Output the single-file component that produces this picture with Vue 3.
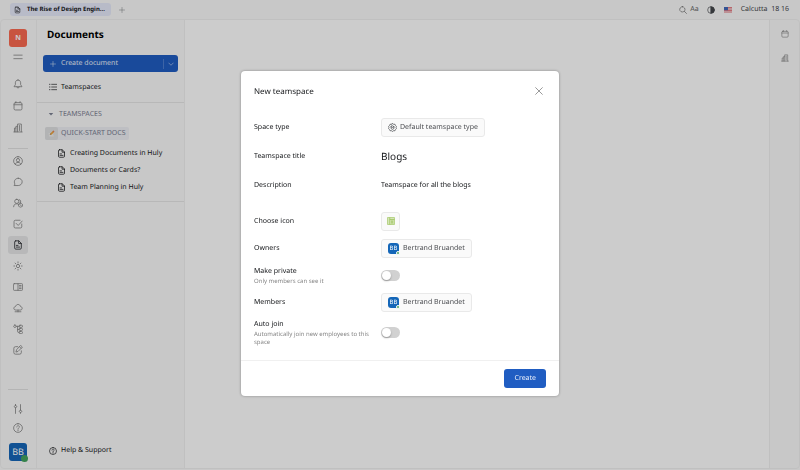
<script setup>
import { h, ref } from 'vue'

const shapes = {
  menu: ['M2 7.500h20', 'M2 16h20'],
  bell: ['M12 2.500c-4 0-6.300 2.800-6.300 6.500v4.500L2.500 18.500h19l-3.200-5V9c0-3.700-2.300-6.500-6.300-6.500z', 'M9 19c0 3.600 6 3.600 6 0'],
  calendar: ['M5.500 4h13a3 3 0 0 1 3 3v11.500a3 3 0 0 1-3 3h-13a3 3 0 0 1-3-3V7a3 3 0 0 1 3-3z', 'M2.500 9h19', 'M7 1.500V4', 'M17 1.500V4'],
  building: ['M2 21.500h20', 'M11 21V2.500h9V21', 'M11 8H7v13', 'M7 12H3.500v9', 'M15.500 6v12'],
  user: ['M12 1.500a10.500 10.500 0 1 0 0 21a10.500 10.500 0 1 0 0-21z', 'M12 6a4 4 0 1 0 0 8a4 4 0 1 0 0-8z', 'M5.500 20c.5-3.500 3-4.500 6.500-4.500s6 1 6.500 4.500'],
  chat: ['M12.500 3c5.500 0 9.500 3.600 9.500 8.500S18 20.500 12.500 20.500H2.500l2.200-3.500C1 11 4.500 3 12.500 3z'],
  people: ['M9 3a5 5 0 1 0 0 10a5 5 0 1 0 0-10z', 'M1.500 21c.5-5 3-7 7.500-7 2 0 3.500.4 4.500 1.300', 'M15 4c4 .5 5 5 2 7.500', 'M18 12a5 5 0 1 0 .1 0z', 'M15.500 14.500l5 5'],
  check: ['M21 12v6.500a3 3 0 0 1-3 3H5.500a3 3 0 0 1-3-3V6a3 3 0 0 1 3-3H17', 'M7.500 10.500l5 5L22 5'],
  document: ['M6.500 2H14l6 6v11a3 3 0 0 1-3 3H7a3 3 0 0 1-3-3V4.500A2.500 2.500 0 0 1 6.500 2z', 'M13.500 2v6.500H20', 'M8 13h4', 'M8 17h8'],
  sun: ['M12 8a4 4 0 1 0 0 8a4 4 0 1 0 0-8z', 'M12 2v2', 'M12 20v2', 'M2 12h2', 'M20 12h2', 'M5 5l1.500 1.500', 'M17.500 17.500L19 19', 'M19 5l-1.500 1.500', 'M6.500 17.500L5 19'],
  board: ['M3 4h18a2 2 0 0 1 2 2v12a2 2 0 0 1-2 2H3a2 2 0 0 1-2-2V6a2 2 0 0 1 2-2z', 'M12 4v16', 'M15.500 8.500h4', 'M15.500 12h4', 'M15.500 15.500h4'],
  cloud: ['M6.500 17C3.500 17 2 15 2 12.800 2 10.500 3.500 9 6 8.500 7 5.500 9 3.500 12 3.500s5.500 2 6 5c2.500.4 4 2 4 4.300S20.500 17 17.500 17z', 'M12 17v4', 'M5 21h14'],
  tree: ['M4.500 2.500a3 3 0 1 0 .1 0z', 'M17 3h3.500a2 2 0 0 1 0 5H17a2 2 0 0 1 0-5z', 'M7.500 5.500H15', 'M11 5.500V18a2 2 0 0 0 2 2h2', 'M11 13h4', 'M17 10.500h3.500a2 2 0 0 1 0 5H17a2 2 0 0 1 0-5z', 'M17 18h3.500a2 2 0 0 1 0 5H17a2 2 0 0 1 0-5z'],
  edit: ['M11 4H6a4 4 0 0 0-4 4v10a4 4 0 0 0 4 4h10a4 4 0 0 0 4-4v-4', 'M19 1.500l3.500 3.500L12 15.500l-5 1.500 1.500-5z', 'M16 4.500l3.500 3.500'],
  sliders: ['M6 9v13.500', 'M6 3a3 3 0 1 0 .1 0z', 'M6 1v2', 'M18 1.500V14', 'M18 14.500a3 3 0 1 0 .1 0z', 'M18 20.500v2'],
  help: ['M12 1.500a10.500 10.500 0 1 0 0 21a10.500 10.500 0 1 0 0-21z', 'M8.800 9.500c0-4.200 6.600-4.200 6.600 0 0 2.300-3.400 2.300-3.400 5', 'M12 17v1.500'],
  plus: ['M12 2v20', 'M2 12h20'],
  down: ['M3 8l9 9 9-9'],
  list: ['M8 4h15', 'M8 12h15', 'M8 20h15', 'M1 4h2', 'M1 12h2', 'M1 20h2'],
  search: ['M10 2a8 8 0 1 0 .1 0z', 'M16 16l6.500 6.500'],
  close: ['M2 2l20 20', 'M22 2L2 22'],
  gear: ['M12 1.500l3 2 3.500-.2 1.500 3.200 2.500 2.500-1 3 1 3-2.500 2.500-1.500 3.200-3.500-.2-3 2-3-2-3.500.2L4 17.500 1.500 15l1-3-1-3L4 6.500l1.500-3.200 3.500.2z', 'M12 7.500l4 2.500v4.500l-4 2.500-4-2.500V10z', 'M8 10l4 2 4-2']
}

const Icon = (props) =>
  h('svg', { viewBox: '0 0 24 24', class: 'icon', 'aria-hidden': 'true' }, shapes[props.name].map((d) => h('path', { d })))
Icon.props = ['name']

const firstNav = [
  { icon: 'bell', label: 'Inbox' },
  { icon: 'calendar', label: 'Planner' },
  { icon: 'building', label: 'Office' }
]
const mainNav = [
  { icon: 'user', label: 'Contacts' },
  { icon: 'chat', label: 'Chat' },
  { icon: 'people', label: 'Team' },
  { icon: 'check', label: 'Tracker' },
  { icon: 'document', label: 'Documents', active: true },
  { icon: 'sun', label: 'Cards' },
  { icon: 'board', label: 'Boards' },
  { icon: 'cloud', label: 'Drive' },
  { icon: 'tree', label: 'Processes' },
  { icon: 'edit', label: 'Surveys' }
]
const docs = ['Creating Documents in Huly', 'Documents or Cards?', 'Team Planning in Huly']

const title = ref('Blogs')
const description = ref('Teamspace for all the blogs')
const isPrivate = ref(false)
const autoJoin = ref(false)
</script>

<template>
  <div class="app">
    <header class="topbar">
      <button class="tab"><Icon name="document" />The Rise of Design Engin...</button>
      <button class="add" aria-label="New tab"><Icon name="plus" /></button>
      <div class="tools">
        <button aria-label="Search"><Icon name="search" /></button>
        <button class="font-size">Aa</button>
        <button class="theme" aria-label="Theme">
          <svg viewBox="0 0 24 24" class="icon"><circle cx="12" cy="12" r="10" /><path class="solid" d="M12 2a10 10 0 0 1 0 20z" /></svg>
        </button>
        <button class="flag" aria-label="Language">
          <svg viewBox="0 0 16 12">
            <rect width="16" height="12" rx="1" fill="#f5eeee" />
            <path d="M0 1h16M0 4h16M0 7h16M0 10h16" stroke="#df5761" stroke-width="1.500" />
            <rect width="8" height="6.500" fill="#4267b8" />
          </svg>
        </button>
        <span class="clock">Calcutta&nbsp; 18 16</span>
      </div>
    </header>

    <div class="frame">
      <nav class="rail">
        <button class="workspace">N</button>
        <button class="burger" aria-label="Menu"><Icon name="menu" /></button>
        <div class="group">
          <button v-for="n in firstNav" :key="n.icon" :aria-label="n.label"><Icon :name="n.icon" /></button>
        </div>
        <hr />
        <div class="group main-group">
          <button v-for="n in mainNav" :key="n.icon" :aria-label="n.label" :class="{ active: n.active }"><Icon :name="n.icon" /></button>
        </div>
        <div class="bottom">
          <hr />
          <button aria-label="Settings"><Icon name="sliders" /></button>
          <button aria-label="Help"><Icon name="help" /></button>
          <button class="avatar large">BB<i></i></button>
        </div>
      </nav>

      <aside class="side">
        <h1>Documents</h1>
        <div class="create">
          <button class="create-main"><Icon name="plus" />Create document</button>
          <button class="create-more" aria-label="More"><Icon name="down" /></button>
        </div>
        <a href="#" class="all"><Icon name="list" />Teamspaces</a>
        <section class="spaces">
          <button class="section-title"><svg viewBox="0 0 8 8"><path d="M1 2.500h6L4 6z" /></svg>TEAMSPACES</button>
          <button class="space">
            <span class="space-icon">
              <svg viewBox="0 0 12 12"><path d="M1 5h7l2 6H2z" fill="#eee" /><path d="M3 8l1-2 5-5 2 2-5 5z" fill="#eaa23b" /><path d="M3 8l1-2 1 1z" fill="#555" /><path d="M8 2l1-1 2 2-1 1z" fill="#df7566" /></svg>
            </span>
            <span class="space-name">QUICK-START DOCS</span>
          </button>
          <a v-for="d in docs" :key="d" href="#" class="doc"><Icon name="document" />{{ d }}</a>
        </section>
        <a href="#" class="support"><Icon name="help" />Help &amp; Support</a>
      </aside>

      <main class="content"></main>

      <aside class="right">
        <button aria-label="Calendar"><Icon name="calendar" /></button>
        <button aria-label="Office"><Icon name="building" /></button>
      </aside>
    </div>

    <div class="overlay">
      <form class="modal" role="dialog" aria-labelledby="dialog-title" @submit.prevent>
        <header class="modal-head">
          <h2 id="dialog-title">New teamspace</h2>
          <button type="button" class="close" aria-label="Close"><Icon name="close" /></button>
        </header>
        <div class="fields">
          <div class="row">
            <label for="type">Space type</label>
            <button id="type" type="button" class="pill"><Icon name="gear" />Default teamspace type</button>
          </div>
          <div class="row">
            <label for="title">Teamspace title</label>
            <input id="title" v-model="title" class="title-input" type="text" />
          </div>
          <div class="row">
            <label for="description">Description</label>
            <input id="description" v-model="description" type="text" />
          </div>
        </div>
        <div class="fields options">
          <div class="row">
            <label for="space-icon">Choose icon</label>
            <button id="space-icon" type="button" class="pill square" aria-label="Choose icon">
              <svg viewBox="0 0 16 16"><path d="M1 1h14v14H1z" fill="#d4e5b5" stroke="#a9cb70" stroke-width="1.500" /><path d="M5.500 1v14M5.500 5H15M10 8v4M8 8h5M8 12h5" fill="none" stroke="#9bc25b" stroke-width="1.500" /></svg>
            </button>
          </div>
          <div class="row">
            <label for="owners">Owners</label>
            <button id="owners" type="button" class="pill person"><span class="avatar">BB<i></i></span>Bertrand Bruandet</button>
          </div>
          <div class="row">
            <label for="private">Make private<small>Only members can see it</small></label>
            <input id="private" v-model="isPrivate" class="toggle" type="checkbox" role="switch" />
          </div>
          <div class="row">
            <label for="members">Members</label>
            <button id="members" type="button" class="pill person"><span class="avatar">BB<i></i></span>Bertrand Bruandet</button>
          </div>
          <div class="row">
            <label for="auto">Auto join<small>Automatically join new employees to this space</small></label>
            <input id="auto" v-model="autoJoin" class="toggle" type="checkbox" role="switch" />
          </div>
        </div>
        <footer class="modal-foot"><button class="submit">Create</button></footer>
      </form>
    </div>
  </div>
</template>

<style>
body { margin: 0; }
</style>

<style scoped>
.app {
  display: flex;
  flex-direction: column;
  box-sizing: border-box;
  min-height: 100vh;
  background: #fbfbfb;
  color: #15171a;
  font: 7px/11px "Noto Sans", "Open Sans", sans-serif;
  text-rendering: geometricPrecision;
}
.app *, .app *::before { box-sizing: border-box; }
button {
  display: flex;
  align-items: center;
  justify-content: center;
  padding: 0;
  border: 0;
  background: none;
  color: inherit;
  font: inherit;
  text-rendering: inherit;
  white-space: nowrap;
}
a { color: inherit; text-decoration: none; }
.icon {
  flex: none;
  width: 10px;
  height: 10px;
  fill: none;
  stroke: currentColor;
  stroke-width: 2;
  stroke-linecap: round;
  stroke-linejoin: round;
}
.icon .solid { fill: currentColor; }

.topbar { display: flex; align-items: center; height: 19px; padding: 0 11px 0 10px; }
.tab { gap: 6px; height: 13px; padding: 0 6px 0 4px; border-radius: 3px; background: #e7eafa; font-size: 6px; font-weight: 700; }
.tab .icon { width: 7px; height: 8px; }
.add { margin-left: 8px; color: #77797e; }
.add .icon { width: 6px; height: 6px; }
.tools { display: flex; align-items: center; margin-left: auto; color: #666; }
.tools .icon { width: 8px; height: 8px; }
.font-size { margin-left: 3px; }
.theme { margin-left: 8px; color: #44474b; }
.flag { margin-left: 9px; }
.flag svg { width: 8px; height: 6px; }
.clock { margin-left: 9px; color: #44474b; }

.frame { display: flex; flex: 1; margin-bottom: 1px; border: 1px solid #f1f1f1; border-radius: 4px; overflow: hidden; }
.rail { display: flex; flex-direction: column; align-items: center; width: 36px; padding: 9px 1px 7px 0; border-right: 1px solid #f1f1f1; color: #858585; }
.rail hr { width: 20px; height: 1px; margin: 0; border: 0; background: #e2e2e2; }
.workspace { width: 18px; height: 18px; border-radius: 3px; background: #fb6a50; color: #fff; font-weight: 700; }
.burger { height: 20px; }
.group { display: flex; flex-direction: column; gap: 4px; padding: 8px 0 11px; }
.group button { width: 20px; height: 18px; }
.main-group { gap: 3px; padding: 3px 0; }
.rail .active { border-radius: 3px; background: #e6e7e8; color: #2c2e33; }
.bottom { display: flex; flex-direction: column; align-items: center; margin-top: auto; }
.bottom > button { height: 19px; }
.bottom hr { margin-bottom: 9px; }
.avatar { position: relative; display: flex; align-items: center; justify-content: center; width: 11px; height: 11px; border-radius: 3px; background: #1466b8; color: #fff; font-size: 6px; line-height: 8px; }
.avatar i { position: absolute; right: -1px; bottom: -1px; width: 4px; height: 4px; border: 1px solid #fff; border-radius: 50%; background: #3f9b58; }
.bottom .large { width: 18px; height: 18px; margin-top: 6px; font-size: 9px; }
.bottom .large i { width: 7px; height: 7px; border: 0; background: #43a35e; }

.side { display: flex; flex-direction: column; width: 148px; border-right: 1px solid #f1f1f1; }
h1 { margin: 7px 0 14px 10px; color: #000; font-size: 10px; line-height: 14px; font-weight: 700; }
.create { display: flex; margin: 0 6px; border-radius: 3px; background: #205dc2; color: #eaf0fb; }
.create-main { flex: 1; justify-content: flex-start; gap: 5px; height: 17px; padding-left: 7px; }
.create-main .icon { width: 6px; height: 6px; }
.create-more { align-self: center; width: 15px; height: 10px; border-left: 1px solid #4d7ed0; }
.create-more .icon { width: 6px; height: 6px; }
.all { display: flex; align-items: center; gap: 4px; height: 30px; padding-left: 12px; }
.all .icon { width: 8px; height: 8px; }
.spaces { display: flex; flex-direction: column; align-items: flex-start; padding-bottom: 5px; border: solid #e6e6e6; border-width: 1px 0; }
.section-title { gap: 5px; height: 22px; padding-left: 11px; color: #7b8092; }
.section-title svg { width: 6px; height: 6px; fill: currentColor; }
.space { height: 13px; margin: 2px 0 5px 8px; border-radius: 2px; background: #eeeff4; color: #777d92; }
.space-icon { display: flex; align-items: center; justify-content: center; width: 13px; height: 13px; border-radius: 2px; background: #dfe0e2; }
.space-icon svg { width: 7px; height: 7px; }
.space-name { padding: 0 3px; }
.doc { display: flex; align-items: center; gap: 4px; height: 17px; padding-left: 20px; white-space: nowrap; }
.doc .icon { width: 9px; height: 9px; }
.support { display: flex; align-items: center; gap: 4px; margin: auto 0 12px 12px; }
.support .icon { width: 8px; height: 8px; }
.content { flex: 1; background: #fff; }
.right { display: flex; flex-direction: column; align-items: center; gap: 14px; width: 30px; padding-top: 9px; border-left: 1px solid #f1f1f1; color: #8a8a8a; }
.right .icon { width: 8px; height: 10px; }

.overlay { position: fixed; inset: 0; display: flex; align-items: center; justify-content: center; padding-bottom: 3px; background: rgba(0, 0, 0, 0.2); }
.modal { width: 318px; max-width: 100%; border-radius: 4px; background: #fff; box-shadow: 0 0 3px rgba(0, 0, 0, 0.35); }
.modal-head { display: flex; align-items: center; justify-content: space-between; height: 40px; padding: 0 16px 0 13px; }
h2 { margin: 0; font-size: 8px; line-height: 13px; font-weight: 400; }
.close { color: #666; }
.close .icon { width: 8px; height: 8px; }
.fields { display: grid; gap: 9px; padding: 6px 13px 0; }
.options { gap: 7px; padding: 16px 13px 14px; }
.row { display: grid; grid-template-columns: 119px 1fr; column-gap: 8px; align-items: center; justify-items: start; min-height: 20px; }
small { display: block; color: #858585; font-size: 6px; line-height: 8px; }
.pill { gap: 3px; height: 19px; padding: 0 6px; border: 1px solid #e9e9e9; border-radius: 3px; background: #fafafa; color: #4a4c50; }
.pill .icon { width: 9px; height: 9px; }
.square { width: 19px; padding: 0; }
.square svg { width: 8px; height: 8px; }
.person { gap: 4px; }
input[type="text"] { width: 100%; padding: 0; border: 0; outline: 0; background: none; color: inherit; font: inherit; text-rendering: inherit; }
input.title-input[type="text"] { font-size: 10px; line-height: 16px; }
.toggle { appearance: none; width: 19px; height: 11px; margin: 0; padding: 1px; border-radius: 6px; background: #d1d1d1; }
.toggle::before { content: ""; display: block; width: 9px; height: 9px; border-radius: 50%; background: #fff; box-shadow: 0 1px 2px rgba(0, 0, 0, 0.3); }
.toggle:checked::before { margin-left: auto; }
.modal-foot { display: flex; justify-content: flex-end; padding: 8px 13px 8px; border-top: 1px solid #f0f0f0; }
.submit { height: 19px; padding: 0 10px; border-radius: 3px; background: #205dc2; color: #eaf0fb; }
</style>
